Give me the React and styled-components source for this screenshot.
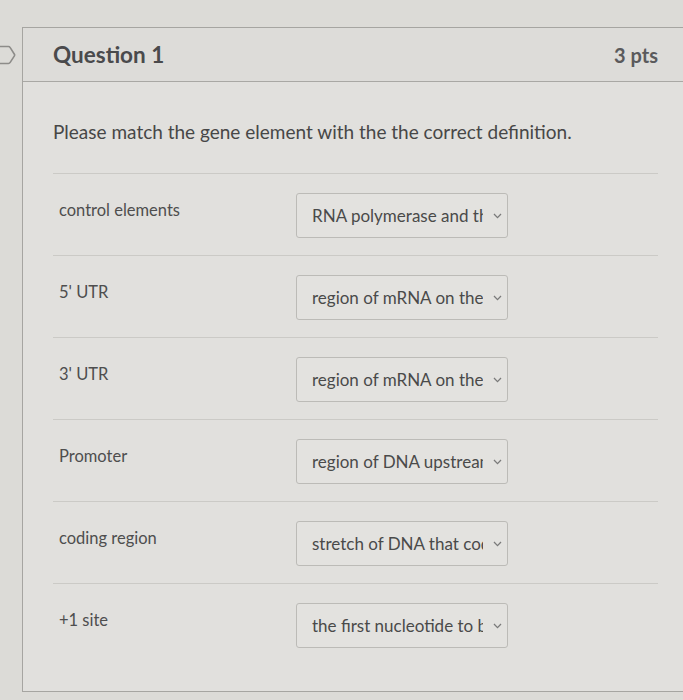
import styled, { createGlobalStyle } from "styled-components";

const GlobalStyle = createGlobalStyle`
  body {
    margin: 0;
    background: #dcdbd7;
    font-family: Lato, "Open Sans", sans-serif;
    color: #454545;
  }
`;

const Page = styled.div`
  display: flex;
  height: 700px;
  padding-top: 27px;
  box-sizing: border-box;
  overflow: hidden;
`;

const Gutter = styled.div`
  width: 22px;
  flex-shrink: 0;
  padding-top: 18px;
`;

const Panel = styled.div`
  flex: 1;
  height: 665px;
  box-sizing: border-box;
  border: 1px solid #a6a5a1;
  border-right: none;
  background: #e1e0dd;
  display: flex;
  flex-direction: column;
`;

const Header = styled.div`
  height: 54px;
  box-sizing: border-box;
  display: flex;
  align-items: center;
  justify-content: space-between;
  padding: 0 25px 0 30px;
  border-bottom: 1px solid #a9a8a4;
  background: #dddcd9;
`;

const Title = styled.h2`
  margin: 0;
  font-size: 22.5px;
  font-weight: 700;
  color: #4a4a4c;
`;

const Points = styled.span`
  font-size: 20px;
  font-weight: 700;
  color: #5a5a5c;
`;

const Body = styled.div`
  padding: 38px 25px 0 30px;
`;

const Prompt = styled.p`
  margin: 0 0 29px;
  font-size: 19px;
  line-height: 24px;
  color: #474747;
`;

const Row = styled.div`
  display: flex;
  align-items: flex-start;
  height: 82px;
  box-sizing: border-box;
  padding-top: 19px;
  border-top: 1px solid #cbcac6;
`;

const Label = styled.div`
  width: 237px;
  padding: 7px 0 0 6px;
  font-size: 16.5px;
  line-height: 20px;
  color: #4e4e4e;
`;

const Select = styled.div`
  width: 212px;
  height: 45px;
  box-sizing: border-box;
  display: flex;
  align-items: center;
  padding: 0 5px 0 15px;
  border: 1px solid #bcbbb7;
  border-radius: 3px;
  background: #e3e2df;
`;

const Choice = styled.span`
  width: 171px;
  overflow: hidden;
  white-space: nowrap;
  font-size: 17px;
  color: #4a4a4a;
`;

const Chevron = styled.svg`
  margin-left: 10px;
  flex-shrink: 0;
`;

const rows = [
  ["control elements", "RNA polymerase and the transcription factors bind"],
  ["5' UTR", "region of mRNA on the 5' end"],
  ["3' UTR", "region of mRNA on the 3' end"],
  ["Promoter", "region of DNA upstream of the gene"],
  ["coding region", "stretch of DNA that codes for protein"],
  ["+1 site", "the first nucleotide to be transcribed"],
];

export default function App() {
  return (
    <>
      <GlobalStyle />
      <Page>
        <Gutter>
          <svg width="16" height="20" viewBox="0 0 16 20">
            <path
              d="M-4 1.5 H8.5 Q9.5 1.5 10.2 2.6 L14.4 9.2 Q14.9 10 14.4 10.8 L10.2 17.4 Q9.5 18.5 8.5 18.5 H-4"
              fill="none"
              stroke="#8d8c89"
              strokeWidth="1.6"
            />
          </svg>
        </Gutter>
        <Panel>
          <Header>
            <Title>Question 1</Title>
            <Points>3 pts</Points>
          </Header>
          <Body>
            <Prompt>Please match the gene element with the the correct definition.</Prompt>
            {rows.map(([label, choice]) => (
              <Row key={label}>
                <Label>{label}</Label>
                <Select>
                  <Choice>{choice}</Choice>
                  <Chevron width="9" height="6" viewBox="0 0 9 6">
                    <path d="M1 1 L4.5 4.6 L8 1" fill="none" stroke="#7a7a7a" strokeWidth="1.3" />
                  </Chevron>
                </Select>
              </Row>
            ))}
          </Body>
        </Panel>
      </Page>
    </>
  );
}
